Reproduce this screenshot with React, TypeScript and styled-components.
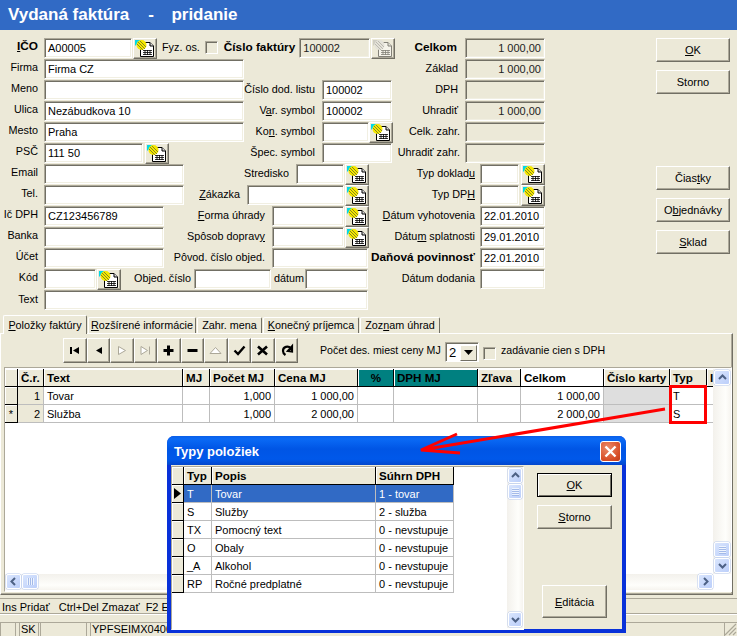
import React from "react";
import styled, { createGlobalStyle } from "styled-components";

const GlobalStyle = createGlobalStyle`
  html, body { margin: 0; padding: 0; background: #ece9d8; }
  body { font-family: "Liberation Sans", Arial, sans-serif; font-size: 11px; color: #000; }
  * { box-sizing: border-box; }
  u { text-underline-offset: 1px; }
`;

const Page = styled.div`
  position: relative; width: 737px; height: 636px; overflow: hidden;
  display: flex; flex-direction: column; background: #ece9d8;
`;
const TitleBar = styled.div`
  height: 30px; flex: none; background: #316ac5; color: #fff; padding-left: 8px;
  font: bold 17px/30px "Liberation Sans", sans-serif; white-space: pre;
`;
const FormArea = styled.div`
  height: 285px; flex: none; display: flex; padding-top: 8px;
`;
const LeftSection = styled.div`width: 393px; flex: none;`;
const RightSection = styled.div`width: 152px; flex: none;`;
const ButtonColumn = styled.div`
  width: 74px; margin-left: 111px; flex: none; display: flex; flex-direction: column; gap: 8px;
`;
const Row = styled.div<{ $end?: boolean }>`
  height: 20px; margin-bottom: 1px; display: flex; align-items: flex-start;
  justify-content: ${(p) => (p.$end ? "flex-end" : "space-between")};
`;
const Group = styled.div<{ $mr?: number }>`
  display: flex; align-items: flex-start; flex: none; margin-right: ${(p) => p.$mr ?? 0}px;
`;
const Label = styled.div<{ $w?: number; $lh?: number; $bold?: boolean; $mr?: number; $ml?: number }>`
  flex: none; text-align: right; white-space: nowrap;
  ${(p) => (p.$w ? `width: ${p.$w}px;` : "")}
  line-height: ${(p) => p.$lh ?? 18}px;
  font-size: ${(p) => (p.$bold ? "11.8px" : "10.8px")};
  font-weight: ${(p) => (p.$bold ? "bold" : "normal")};
  margin-right: ${(p) => p.$mr ?? 7}px;
  margin-left: ${(p) => p.$ml ?? 0}px;
`;
const Field = styled.div<{ $w: number; $ro?: boolean; $right?: boolean; $ml?: number }>`
  flex: none; width: ${(p) => p.$w}px; height: 20px; padding: 0 3px;
  margin-left: ${(p) => p.$ml ?? 0}px;
  background: ${(p) => (p.$ro ? "#ece9d8" : "#fff")};
  border: 1px solid; border-color: #aca899 #fff #fff #aca899;
  box-shadow: inset 1px 1px 0 #716f64, inset -1px -1px 0 #f1efe2;
  font-size: 11px; line-height: 18px; white-space: nowrap; overflow: hidden;
  text-align: ${(p) => (p.$right ? "right" : "left")};
  color: ${(p) => (p.$ro ? "#222" : "#000")};
`;
const IconButton = styled.div<{ $ml?: number; $off?: boolean }>`
  flex: none; width: 24px; height: 21px; margin-left: ${(p) => p.$ml ?? 1}px;
  display: flex; align-items: center; justify-content: center; background: #ece9d8;
  border: 1px solid; border-color: #fff #716f64 #716f64 #fff;
  box-shadow: inset -1px -1px 0 #aca899;
  svg { filter: ${(p) => (p.$off ? "grayscale(1) opacity(.45)" : "none")}; }
`;
const Checkbox = styled.div<{ $ml?: number; $mt?: number }>`
  flex: none; width: 13px; height: 13px; margin: ${(p) => p.$mt ?? 3}px 0 0 ${(p) => p.$ml ?? 0}px; background: #ece9d8;
  border: 1px solid; border-color: #aca899 #fff #fff #aca899;
  box-shadow: inset 1px 1px 0 #716f64;
`;
const PushButton = styled.div<{ $mt?: number; $w?: number; $h?: number; $def?: boolean; $ml?: number; $mb?: number }>`
  flex: none; width: ${(p) => p.$w ?? 74}px; height: ${(p) => p.$h ?? 24}px;
  margin-top: ${(p) => p.$mt ?? 0}px; margin-left: ${(p) => p.$ml ?? 0}px; margin-bottom: ${(p) => p.$mb ?? 0}px;
  display: flex; align-items: center; justify-content: center; font-size: 11px; background: #ece9d8;
  border: 1px solid; border-color: ${(p) => (p.$def ? "#000" : "#fff #716f64 #716f64 #fff")};
  box-shadow: ${(p) => (p.$def ? "inset 1px 1px 0 #fff, inset -1px -1px 0 #716f64" : "inset -1px -1px 0 #aca899")};
`;

const Tabs = styled.div`
  height: 18px; flex: none; display: flex; align-items: flex-end; padding-left: 3px; position: relative; z-index: 1;
`;
const Tab = styled.div<{ $w: number; $active?: boolean }>`
  flex: none; width: ${(p) => p.$w}px; height: ${(p) => (p.$active ? 19 : 16)}px;
  margin-bottom: ${(p) => (p.$active ? -1 : 0)}px; margin-right: 1px;
  display: flex; align-items: center; justify-content: center; font-size: 10.8px; white-space: nowrap;
  background: #ece9d8;
  border-top: 1px solid #fff; border-left: 1px solid #fff; border-right: 1px solid #716f64;
  border-radius: 2px 2px 0 0;
  padding-bottom: 1px;
`;
const TabPanel = styled.div`
  height: 262px; width: 733px; flex: none; padding: 4px 0 0 3px; background: #ece9d8;
  border: 1px solid; border-color: #fff #716f64 #716f64 #fff;
  box-shadow: -1px 0 0 #fff, inset -1px -1px 0 #aca899;
`;
const Toolbar = styled.div`
  height: 25px; display: flex; align-items: flex-start; padding-left: 59px; margin-bottom: 4px;
`;
const NavButton = styled.div`
  flex: none; width: 23.5px; height: 25px; display: flex; align-items: center; justify-content: center;
  background: #ece9d8; border: 1px solid; border-color: #fff #716f64 #716f64 #fff;
  box-shadow: inset -1px -1px 0 #aca899;
`;
const ToolLabel = styled.div<{ $ml: number; $w: number }>`
  flex: none; margin-left: ${(p) => p.$ml}px; width: ${(p) => p.$w}px; line-height: 25px; font-size: 10.6px; white-space: nowrap;
`;
const SelectBox = styled.div`
  flex: none; width: 34px; height: 20px; margin: 4px 0 0 5px; background: #fff; display: flex;
  align-items: center; justify-content: space-between; padding-left: 3px; font-size: 13px;
  border: 1px solid; border-color: #aca899 #fff #fff #aca899; box-shadow: inset 1px 1px 0 #716f64;
`;
const SelectArrow = styled.div`
  width: 17px; height: 16px; margin: 1px 1px 0 0; background: #ece9d8; display: flex; align-items: center; justify-content: center;
  border: 1px solid; border-color: #fff #716f64 #716f64 #fff;
`;
const GridFrame = styled.div<{ $h: number; $w: number; $top: number }>`
  width: ${(p) => p.$w}px; height: ${(p) => p.$h}px; flex: none; background: #fff; display: flex; flex-direction: column;
  padding: ${(p) => p.$top}px 0 1px 0;
  border: 1px solid; border-color: #aca899 #fff #fff #aca899;
  overflow: hidden;
`;
const GridMain = styled.div`flex: 1; min-height: 0; display: flex;`;
const TableWrap = styled.div`flex: 1; min-width: 0; overflow: hidden;`;
const Table = styled.table<{ $w: number }>`
  table-layout: fixed; border-collapse: separate; border-spacing: 0; width: ${(p) => p.$w}px; font-size: 11px;
`;
const Th = styled.th<{ $bg?: string; $center?: boolean }>`
  height: 18px; padding: 0 2px 0 3px; font-size: 11.6px; font-weight: bold; white-space: nowrap; overflow: hidden;
  text-align: ${(p) => (p.$center ? "center" : "left")};
  background: ${(p) => p.$bg ?? "#ece9d8"};
  border-right: 1px solid #000; border-bottom: 1px solid #000;
  box-shadow: inset 1px 1px 0 #fff;
`;
const Td = styled.td<{ $right?: boolean; $bg?: string; $sel?: boolean }>`
  height: 18px; padding: 0 3px; white-space: nowrap; overflow: hidden;
  text-align: ${(p) => (p.$right ? "right" : "left")};
  background: ${(p) => (p.$sel ? "#316ac5" : p.$bg ?? "#fff")};
  color: ${(p) => (p.$sel ? "#fff" : "#000")};
  border-right: 1px solid #bdbdbd; border-bottom: 1px solid #bdbdbd;
`;
const Indicator = styled.td`
  height: 18px; padding: 0; text-align: center; background: #ece9d8; font-size: 11px; line-height: 10px;
  border-right: 1px solid #000; border-bottom: 1px solid #000;
  box-shadow: inset 1px 1px 0 #fff;
`;
const VScroll = styled.div<{ $w: number }>`
  flex: none; width: ${(p) => p.$w}px; display: flex; flex-direction: column; gap: 1px; padding: 1px;
  background: linear-gradient(90deg, #f3f1ec, #fefefb 70%, #f6f4ef);
`;
const HScroll = styled.div`
  flex: none; height: 16px; margin-right: 18px; display: flex; gap: 1px; padding: 0 0 1px 1px;
  background: linear-gradient(180deg, #f3f1ec, #fefefb 70%, #f6f4ef);
`;
const ScrollBtn = styled.div<{ $w?: number; $h?: number }>`
  flex: none; width: ${(p) => p.$w ?? 15}px; height: ${(p) => p.$h ?? 15}px;
  display: flex; align-items: center; justify-content: center; border-radius: 2px;
  background: linear-gradient(135deg, #d9e5fd, #bccffa); border: 1px solid #fff;
  box-shadow: 0 0 0 .5px #b8c9ee;
`;
const ScrollSpacer = styled.div`flex: 1;`;

const Dialog = styled.div`
  position: absolute; left: 167px; top: 436px; width: 459px; height: 197px; z-index: 3;
  display: flex; flex-direction: column; background: #0831d9; padding: 0 4px 4px;
  border-radius: 7px 7px 0 0;
`;
const DialogTitle = styled.div`
  height: 29px; flex: none; margin: 0 -4px; padding: 1px 5px 0 7px; display: flex; align-items: center; justify-content: space-between;
  border-radius: 7px 7px 0 0; color: #fff; font: bold 13px "Liberation Sans", sans-serif;
  background: linear-gradient(180deg, #0a5fe8 0%, #0a6af5 10%, #0055e5 45%, #0058ea 80%, #0346cc 100%);
`;
const CloseButton = styled.div`
  width: 21px; height: 21px; display: flex; align-items: center; justify-content: center; border-radius: 3px;
  border: 1px solid #fff; background: radial-gradient(circle at 35% 30%, #e98a6a, #d9502a 65%, #c03a18);
`;
const DialogBody = styled.div`
  flex: 1; min-height: 0; display: flex; background: #ece9d8; padding: 1px 0 0 0;
`;
const DialogSide = styled.div`flex: 1; display: flex; flex-direction: column; padding: 7px 0 0 13px;`;
const StatusLine = styled.div`
  margin-top: 3px; height: 17px; flex: none; padding: 0 2px; font-size: 11px; line-height: 16px; white-space: pre; overflow: hidden;
  border-top: 1px solid #aca899; border-bottom: 1px solid #fff;
  box-shadow: inset 0 -1px 0 #aca899;
`;
const StatusBar = styled.div`
  margin-top: 7px; height: 14px; flex: 1; display: flex; border-top: 1px solid #aca899; font-size: 11px;
`;
const StatusCell = styled.div<{ $w: number; $ml: number }>`
  flex: none; width: ${(p) => p.$w}px; margin-left: ${(p) => p.$ml}px; padding-left: 1px; white-space: nowrap; line-height: 13px;
  border-left: 1px solid #aca899; border-right: 1px solid #aca899;
`;
const Overlay = styled.svg`
  position: absolute; left: 0; top: 0; width: 737px; height: 636px; z-index: 4; pointer-events: none;
`;
const Mark = styled.div`
  position: absolute; left: 669px; top: 385px; width: 38px; height: 39px; border: 3px solid #f00; z-index: 2; pointer-events: none;
`;
const Grip = styled.svg`position: absolute; right: 0; bottom: 0; z-index: 1;`;

const DocIcon = () => (
  <svg width="20" height="18" viewBox="0 0 20 18">
    <path d="M5.5 2.5H15L18.5 6V16.5H5.5Z" fill="#fff" stroke="#000" />
    <path d="M15 2.5V6H18.5" fill="#ddd" stroke="#000" />
    <path d="M8 10.5H17M8 12.5H17M8 14.5H17M10 10V15M12.5 10V15M15 10V15" stroke="#000" strokeWidth=".8" />
    <path d="M0 0H6L0 6Z" fill="#00d8e8" />
    <circle cx="6.5" cy="5" r="5" fill="#f5e800" />
    <path d="M3 2L10 9M5 1L11 7M2 4L8 10" stroke="#7a7a20" strokeWidth=".9" />
  </svg>
);
const Gl = ({ d, fill = "#000", stroke = "none", sw = 1 }: { d: string; fill?: string; stroke?: string; sw?: number }) => (
  <svg width="15" height="15" viewBox="0 0 15 15">
    <path d={d} fill={fill} stroke={stroke} strokeWidth={sw} />
  </svg>
);
const Chevron = ({ d }: { d: string }) => (
  <svg width="11" height="11" viewBox="0 0 11 11">
    <path d={d} fill="none" stroke="#4d6185" strokeWidth="2" />
  </svg>
);
const up = "M2 7L5.5 3.5L9 7";
const down = "M2 4L5.5 7.5L9 4";
const left = "M7 2L3.5 5.5L7 9";
const right = "M4 2L7.5 5.5L4 9";
const ThumbV = () => (
  <svg width="9" height="9" viewBox="0 0 9 9">
    <path d="M1 1.5H8M1 3.5H8M1 5.5H8M1 7.5H8" stroke="#eef4fe" strokeWidth="1" />
    <path d="M1 2.5H8M1 4.5H8M1 6.5H8M1 8.5H8" stroke="#8ca6dd" strokeWidth=".6" />
  </svg>
);
const ThumbH = () => (
  <svg width="9" height="9" viewBox="0 0 9 9">
    <path d="M1.5 1V8M3.5 1V8M5.5 1V8M7.5 1V8" stroke="#eef4fe" strokeWidth="1" />
    <path d="M2.5 1V8M4.5 1V8M6.5 1V8" stroke="#8ca6dd" strokeWidth=".6" />
  </svg>
);

const mainCols = [13, 26, 139, 27, 65, 83, 36, 84, 43, 83, 66, 37, 20];
const mainRows = [
  ["1", "Tovar", "", "1,000", "1 000,00", "", "", "", "1 000,00", "", "T", ""],
  ["2", "Služba", "", "1,000", "2 000,00", "", "", "", "2 000,00", "", "S", ""],
];
const dlgRows = [
  ["T", "Tovar", "1 - tovar"],
  ["S", "Služby", "2 - služba"],
  ["TX", "Pomocný text", "0 - nevstupuje"],
  ["O", "Obaly", "0 - nevstupuje"],
  ["_A", "Alkohol", "0 - nevstupuje"],
  ["RP", "Ročné predplatné", "0 - nevstupuje"],
];

export default function App() {
  return (
    <Page>
      <GlobalStyle />
      <TitleBar>{"Vydaná faktúra    -   \u2009pridanie"}</TitleBar>
      <FormArea>
        <LeftSection>
          <Row>
            <Group>
              <Label $w={38} $lh={17} $bold $mr={6}><u>I</u>ČO</Label>
              <Field $w={88}>A00005</Field>
              <IconButton><DocIcon /></IconButton>
              <Label $lh={18} $ml={5} $mr={5}>Fyz. os.</Label>
              <Checkbox />
              <Label $lh={18} $bold $ml={6} $mr={4}>Číslo faktúry</Label>
              <Field $w={71} $ro>100002</Field>
              <IconButton $off><DocIcon /></IconButton>
            </Group>
          </Row>
          <Row><Group><Label $w={38} $lh={16} $mr={6}>Firma</Label><Field $w={200}>Firma CZ</Field></Group></Row>
          <Row>
            <Group><Label $w={38} $lh={16} $mr={6}>Meno</Label><Field $w={200} /></Group>
            <Group $mr={1}><Label>Číslo dod. listu</Label><Field $w={70}>100002</Field></Group>
          </Row>
          <Row>
            <Group><Label $w={38} $lh={16} $mr={6}>Ulica</Label><Field $w={200}>Nezábudkova 10</Field></Group>
            <Group $mr={1}><Label>V<u>a</u>r. symbol</Label><Field $w={70}>100002</Field></Group>
          </Row>
          <Row>
            <Group><Label $w={38} $lh={16} $mr={6}>Mesto</Label><Field $w={200}>Praha</Field></Group>
            <Group><Label>Ko<u>n</u>. symbol</Label><Field $w={47} /><IconButton $ml={0}><DocIcon /></IconButton></Group>
          </Row>
          <Row>
            <Group><Label $w={38} $lh={16} $mr={6}>PSČ</Label><Field $w={99}>111 50</Field><IconButton $ml={2}><DocIcon /></IconButton></Group>
            <Group $mr={1}><Label>Špec. symbol</Label><Field $w={70} /></Group>
          </Row>
          <Row>
            <Group><Label $w={38} $lh={16} $mr={6}>Email</Label><Field $w={140} /></Group>
            <Group $mr={24}><Label>Stredisko</Label><Field $w={48} /><IconButton><DocIcon /></IconButton></Group>
          </Row>
          <Row>
            <Group><Label $w={38} $lh={16} $mr={6}>Tel.</Label><Field $w={140} /></Group>
            <Group $mr={24}><Label><u>Z</u>ákazka</Label><Field $w={97} /><IconButton><DocIcon /></IconButton></Group>
          </Row>
          <Row>
            <Group><Label $w={38} $lh={16} $mr={6}>Ič DPH</Label><Field $w={120}>CZ123456789</Field></Group>
            <Group $mr={24}><Label><u>F</u>orma úhrady</Label><Field $w={72} /><IconButton><DocIcon /></IconButton></Group>
          </Row>
          <Row>
            <Group><Label $w={38} $lh={16} $mr={6}>Banka</Label><Field $w={120} /></Group>
            <Group $mr={24}><Label>Spôsob doprav<u>y</u></Label><Field $w={72} /><IconButton><DocIcon /></IconButton></Group>
          </Row>
          <Row>
            <Group><Label $w={38} $lh={16} $mr={6}>Účet</Label><Field $w={120} /></Group>
            <Group $mr={25}><Label>Pôvod. číslo objed.</Label><Field $w={96} /></Group>
          </Row>
          <Row>
            <Group>
              <Label $w={38} $lh={16} $mr={6}>Kód</Label><Field $w={52} /><IconButton><DocIcon /></IconButton>
              <Label $w={56} $ml={13} $mr={4}>Ob<u>j</u>ed. číslo</Label><Field $w={77} />
              <Label $w={28} $ml={3} $mr={3}>dátum</Label><Field $w={63} />
            </Group>
          </Row>
          <Row><Group><Label $w={38} $lh={18} $mr={6}>Text</Label><Field $w={324} /></Group></Row>
        </LeftSection>
        <RightSection>
          <Row $end><Label $bold $mr={8}>Celkom</Label><Field $w={80} $ro $right>1 000,00</Field></Row>
          <Row $end><Label $mr={7}>Základ</Label><Field $w={80} $ro $right>1 000,00</Field></Row>
          <Row $end><Label $mr={7}>DPH</Label><Field $w={80} $ro $right /></Row>
          <Row $end><Label $mr={7}>Uhradiť</Label><Field $w={80} $ro $right>1 000,00</Field></Row>
          <Row $end><Label $mr={5}>Celk. zahr.</Label><Field $w={80} $ro $right /></Row>
          <Row $end><Label $mr={5}>Uhradiť zahr.</Label><Field $w={80} $ro $right /></Row>
          <Row $end><Label $mr={5}>Typ doklad<u>u</u></Label><Field $w={39} /><IconButton $ml={2}><DocIcon /></IconButton></Row>
          <Row $end><Label $mr={5}>Typ DP<u>H</u></Label><Field $w={39} /><IconButton $ml={2}><DocIcon /></IconButton></Row>
          <Row $end><Label $mr={5}><u>D</u>átum vyhotovenia</Label><Field $w={65}>22.01.2010</Field></Row>
          <Row $end><Label $mr={5}>Dátu<u>m</u> splatnosti</Label><Field $w={65}>29.01.2010</Field></Row>
          <Row $end><Label $bold $mr={5}>Daňová povinnosť</Label><Field $w={65}>22.01.2010</Field></Row>
          <Row $end><Label $mr={5}>Dátum  dodania</Label><Field $w={65} /></Row>
        </RightSection>
        <ButtonColumn>
          <PushButton><span><u>O</u>K</span></PushButton>
          <PushButton>Storno</PushButton>
          <PushButton $mt={64}><span>Čias<u>t</u>ky</span></PushButton>
          <PushButton><span>O<u>b</u>jednávky</span></PushButton>
          <PushButton><span><u>S</u>klad</span></PushButton>
        </ButtonColumn>
      </FormArea>
      <Tabs>
        <Tab $w={84} $active><span><u>P</u>oložky faktúry</span></Tab>
        <Tab $w={108}><span><u>R</u>ozšírené informácie</span></Tab>
        <Tab $w={65}>Zahr. mena</Tab>
        <Tab $w={96}><span><u>K</u>onečný príjemca</span></Tab>
        <Tab $w={80}><span>Zoz<u>n</u>am úhrad</span></Tab>
      </Tabs>
      <TabPanel>
        <Toolbar>
          <NavButton><Gl d="M3 4H5V11H3ZM12 4V11L6 7.5Z" /></NavButton>
          <NavButton><Gl d="M11 4V11L5 7.5Z" /></NavButton>
          <NavButton><Gl d="M4.5 3.5L11.5 7.5L4.5 11.5Z" fill="#fff" stroke="#aca899" /></NavButton>
          <NavButton><Gl d="M3 3.5L9.5 7.5L3 11.5ZM11.5 3.5V11.5" fill="#fff" stroke="#aca899" /></NavButton>
          <NavButton><Gl d="M6 2.5H9V6H12.5V9H9V12.5H6V9H2.5V6H6Z" /></NavButton>
          <NavButton><Gl d="M2.5 6H12.5V9H2.5Z" /></NavButton>
          <NavButton><Gl d="M2 10.5L7.5 4.5L13 10.5Z" fill="#fff" stroke="#aca899" /></NavButton>
          <NavButton><Gl d="M2.5 7.5L6 11L12.5 3.5" fill="none" stroke="#000" sw={2.4} /></NavButton>
          <NavButton><Gl d="M3 3.5L12 11.5M12 3.5L3 11.5" fill="none" stroke="#000" sw={2.6} /></NavButton>
          <NavButton><Gl d="M12 5C9 2.5 4 3.5 4 8C4 9.5 5 11 6.5 12M9 8L13 8.5L13 3.5Z" fill="none" stroke="#000" sw={2.2} /></NavButton>
          <ToolLabel $ml={22} $w={120}>Počet des. miest ceny MJ</ToolLabel>
          <SelectBox>2<SelectArrow><svg width="9" height="5" viewBox="0 0 9 5"><path d="M0 0H9L4.5 5Z" /></svg></SelectArrow></SelectBox>
          <Checkbox $ml={4} $mt={9} />
          <ToolLabel $ml={5} $w={110}>zadávanie cien s DPH</ToolLabel>
        </Toolbar>
        <GridFrame $w={728} $h={225} $top={1}>
          <GridMain>
            <TableWrap>
              <Table $w={722}>
                <colgroup>{mainCols.map((w, i) => <col key={i} style={{ width: w }} />)}</colgroup>
                <thead>
                  <tr>
                    <Th />
                    <Th>Č.r.</Th><Th>Text</Th><Th>MJ</Th><Th>Počet MJ</Th><Th>Cena MJ</Th>
                    <Th $bg="#008080" $center>%</Th><Th $bg="#008080">DPH MJ</Th>
                    <Th>Zľava</Th><Th $bg="#fff">Celkom</Th><Th>Číslo karty</Th><Th>Typ</Th><Th>I</Th>
                  </tr>
                </thead>
                <tbody>
                  {mainRows.map((r, i) => (
                    <tr key={i}>
                      <Indicator>{i === 1 ? "*" : ""}</Indicator>
                      <Td $right $bg="#ece9d8">{r[0]}</Td>
                      <Td>{r[1]}</Td><Td>{r[2]}</Td><Td $right>{r[3]}</Td><Td $right>{r[4]}</Td>
                      <Td>{r[5]}</Td><Td>{r[6]}</Td><Td>{r[7]}</Td><Td $right>{r[8]}</Td>
                      <Td $bg="#dedede">{r[9]}</Td><Td>{r[10]}</Td><Td>{r[11]}</Td>
                    </tr>
                  ))}
                </tbody>
              </Table>
            </TableWrap>
            <VScroll $w={18}>
              <ScrollBtn $w={16}><Chevron d={up} /></ScrollBtn>
              <ScrollSpacer />
              <ScrollBtn $w={16}><ThumbV /></ScrollBtn>
              <ScrollBtn $w={16}><Chevron d={down} /></ScrollBtn>
            </VScroll>
          </GridMain>
          <HScroll>
            <ScrollBtn><Chevron d={left} /></ScrollBtn>
            <ScrollBtn $w={16}><ThumbH /></ScrollBtn>
            <ScrollSpacer />
            <ScrollBtn><Chevron d={right} /></ScrollBtn>
          </HScroll>
        </GridFrame>
      </TabPanel>
      <StatusLine>{"Ins Pridať   Ctrl+Del Zmazať  F2 Editácia"}</StatusLine>
      <StatusBar>
        <StatusCell $w={16} $ml={0} />
        <StatusCell $w={20} $ml={3}>SK</StatusCell>
        <StatusCell $w={47} $ml={1} />
        <StatusCell $w={635} $ml={3}>YPFSEIMX04000</StatusCell>
        <Grip width="14" height="14" viewBox="0 0 14 14">
          <path d="M13 2L2 13M13 6L6 13M13 10L10 13" stroke="#aca899" strokeWidth="1.2" />
        </Grip>
      </StatusBar>

      <Mark />
      <Dialog>
        <DialogTitle>
          Typy položiek
          <CloseButton>
            <svg width="13" height="13" viewBox="0 0 13 13"><path d="M1.5 1.5L11.5 11.5M11.5 1.5L1.5 11.5" stroke="#fff" strokeWidth="2.4" /></svg>
          </CloseButton>
        </DialogTitle>
        <DialogBody>
          <GridFrame $w={353} $h={164} $top={0}>
            <GridMain>
              <TableWrap>
                <Table $w={282}>
                  <colgroup>{[12, 28, 164, 78].map((w, i) => <col key={i} style={{ width: w }} />)}</colgroup>
                  <thead>
                    <tr><Th /><Th>Typ</Th><Th>Popis</Th><Th>Súhrn DPH</Th></tr>
                  </thead>
                  <tbody>
                    {dlgRows.map((r, i) => (
                      <tr key={i}>
                        <Indicator>
                          {i === 0 && <svg width="7" height="11" viewBox="0 0 7 11"><path d="M0 0L7 5.5L0 11Z" /></svg>}
                        </Indicator>
                        <Td $sel={i === 0}>{r[0]}</Td><Td $sel={i === 0}>{r[1]}</Td><Td $sel={i === 0}>{r[2]}</Td>
                      </tr>
                    ))}
                  </tbody>
                </Table>
              </TableWrap>
              <VScroll $w={16}>
                <ScrollBtn $w={14}><Chevron d={up} /></ScrollBtn>
                <ScrollBtn $w={14}><ThumbV /></ScrollBtn>
                <ScrollSpacer />
                <ScrollBtn $w={14}><Chevron d={down} /></ScrollBtn>
              </VScroll>
            </GridMain>
          </GridFrame>
          <DialogSide>
            <PushButton $w={75} $def><span><u>O</u>K</span></PushButton>
            <PushButton $w={75} $mt={8}><span><u>S</u>torno</span></PushButton>
            <PushButton $w={65} $h={33} $ml={5} $mt={56}><span><u>E</u>ditácia</span></PushButton>
          </DialogSide>
        </DialogBody>
      </Dialog>
      <Overlay viewBox="0 0 737 636">
        <path d="M665 409L421 450M457 434L421 450L460 453" fill="none" stroke="#f00" strokeWidth="3" />
      </Overlay>
    </Page>
  );
}
